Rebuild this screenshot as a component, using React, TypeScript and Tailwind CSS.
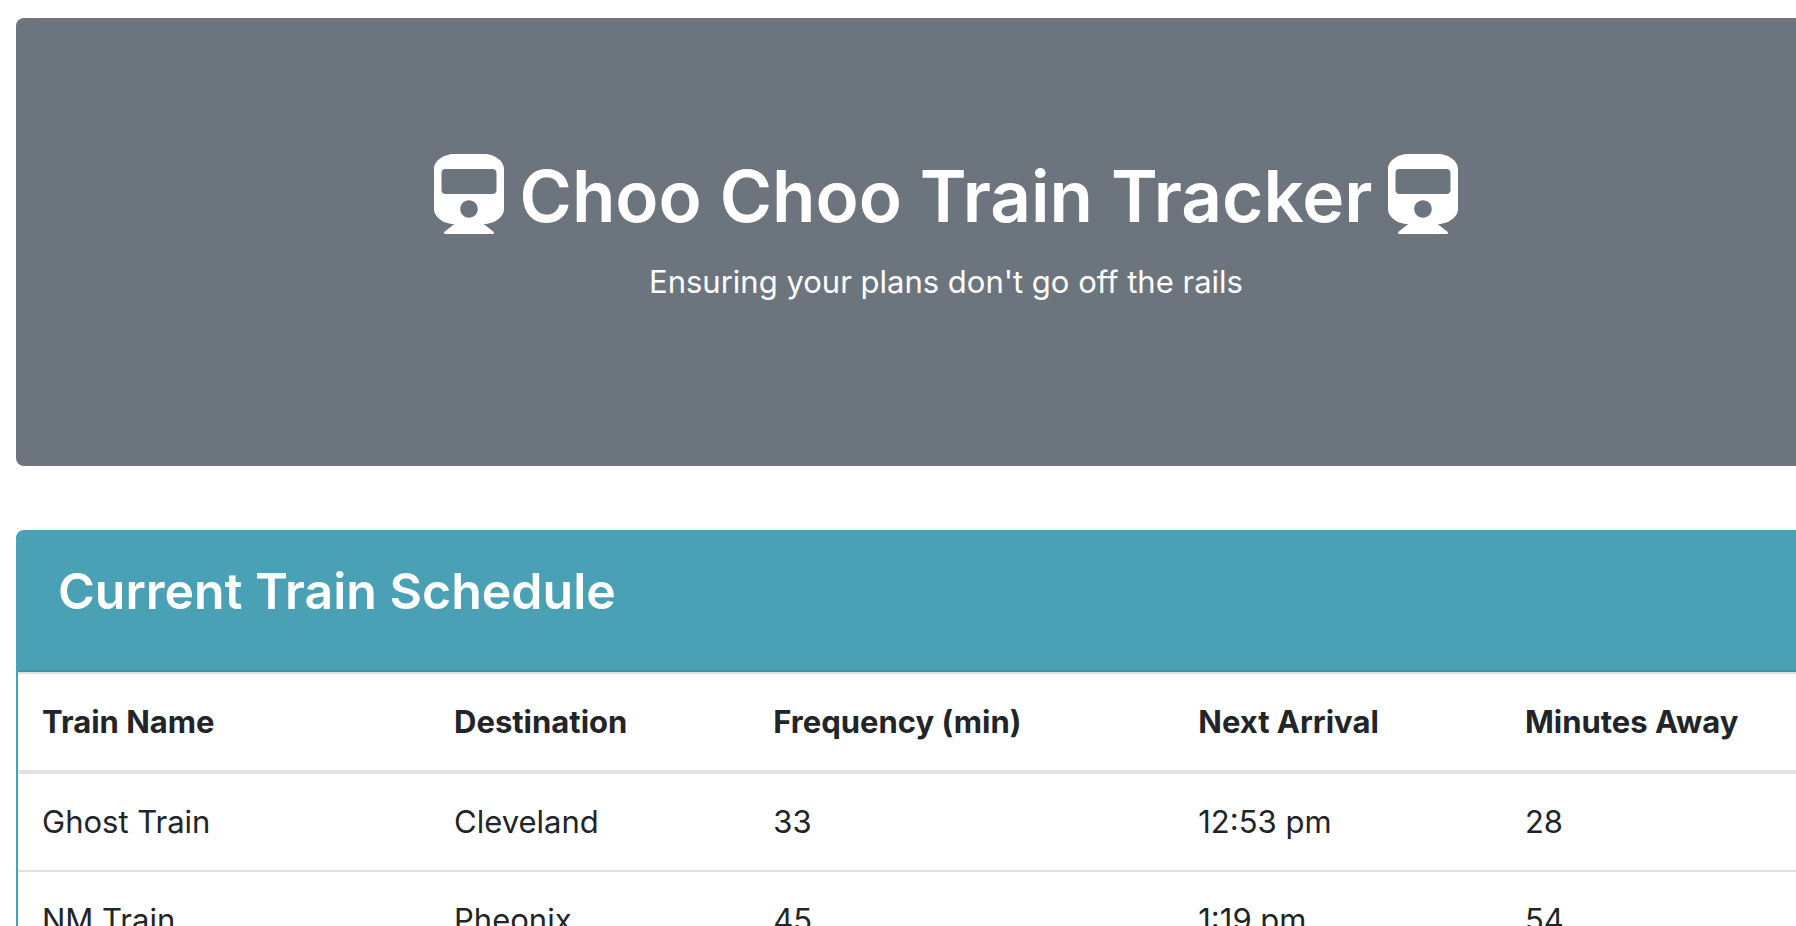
import { FaTrain } from "react-icons/fa";

const trains = [
  { name: "Ghost Train", destination: "Cleveland", frequency: 33, next: "12:53 pm", away: 28 },
  { name: "NM Train", destination: "Pheonix", frequency: 45, next: "1:19 pm", away: 54 },
];

const columns = [
  { label: "Train Name", width: "w-[22.2%]" },
  { label: "Destination", width: "w-[17.2%]" },
  { label: "Frequency (min)", width: "w-[22.9%]" },
  { label: "Next Arrival", width: "w-[17.6%]" },
  { label: "Minutes Away", width: "" },
];

function Hero() {
  return (
    <header className="rounded-lg bg-[#6c757d] px-16 pt-32 pb-40 text-center text-white">
      <h1 className="flex items-start justify-center gap-4 text-[71px] leading-[100px] font-semibold whitespace-nowrap">
        <FaTrain className="mt-2 h-20 w-[70px] shrink-0" aria-hidden="true" />
        Choo Choo Train Tracker
        <FaTrain className="mt-2 h-20 w-[70px] shrink-0" aria-hidden="true" />
      </h1>
      <p className="mt-3 text-[31px] leading-[48px]">Ensuring your plans don't go off the rails</p>
    </header>
  );
}

function Schedule() {
  return (
    <section className="mt-16 rounded-lg border-2 border-[#4aa0b5] bg-white">
      <div className="border-b-2 border-[#448fa3] bg-[#4aa0b5] px-10 pt-6 pb-11 text-white">
        <h2 className="text-[50px] leading-[70px] font-semibold">Current Train Schedule</h2>
      </div>
      <table className="w-full table-fixed border-separate border-spacing-0 text-left text-[31px] leading-[48px]">
        <thead>
          <tr>
            {columns.map((c) => (
              <th
                key={c.label}
                scope="col"
                className={`${c.width} border-t-2 border-b-4 border-[#dee2e6] p-6 font-bold whitespace-nowrap`}
              >
                {c.label}
              </th>
            ))}
          </tr>
        </thead>
        <tbody>
          {trains.map((t) => (
            <tr key={t.name}>
              {[t.name, t.destination, t.frequency, t.next, t.away].map((value, i) => (
                <td key={i} className="border-b-2 border-[#dee2e6] p-6">
                  {value}
                </td>
              ))}
            </tr>
          ))}
        </tbody>
      </table>
    </section>
  );
}

export default function App() {
  return (
    <main className="h-screen overflow-hidden bg-white pt-[18px] pl-4 font-['Inter','Liberation_Sans',sans-serif] text-[#212529]">
      <div className="-mr-20">
        <Hero />
        <Schedule />
      </div>
    </main>
  );
}
